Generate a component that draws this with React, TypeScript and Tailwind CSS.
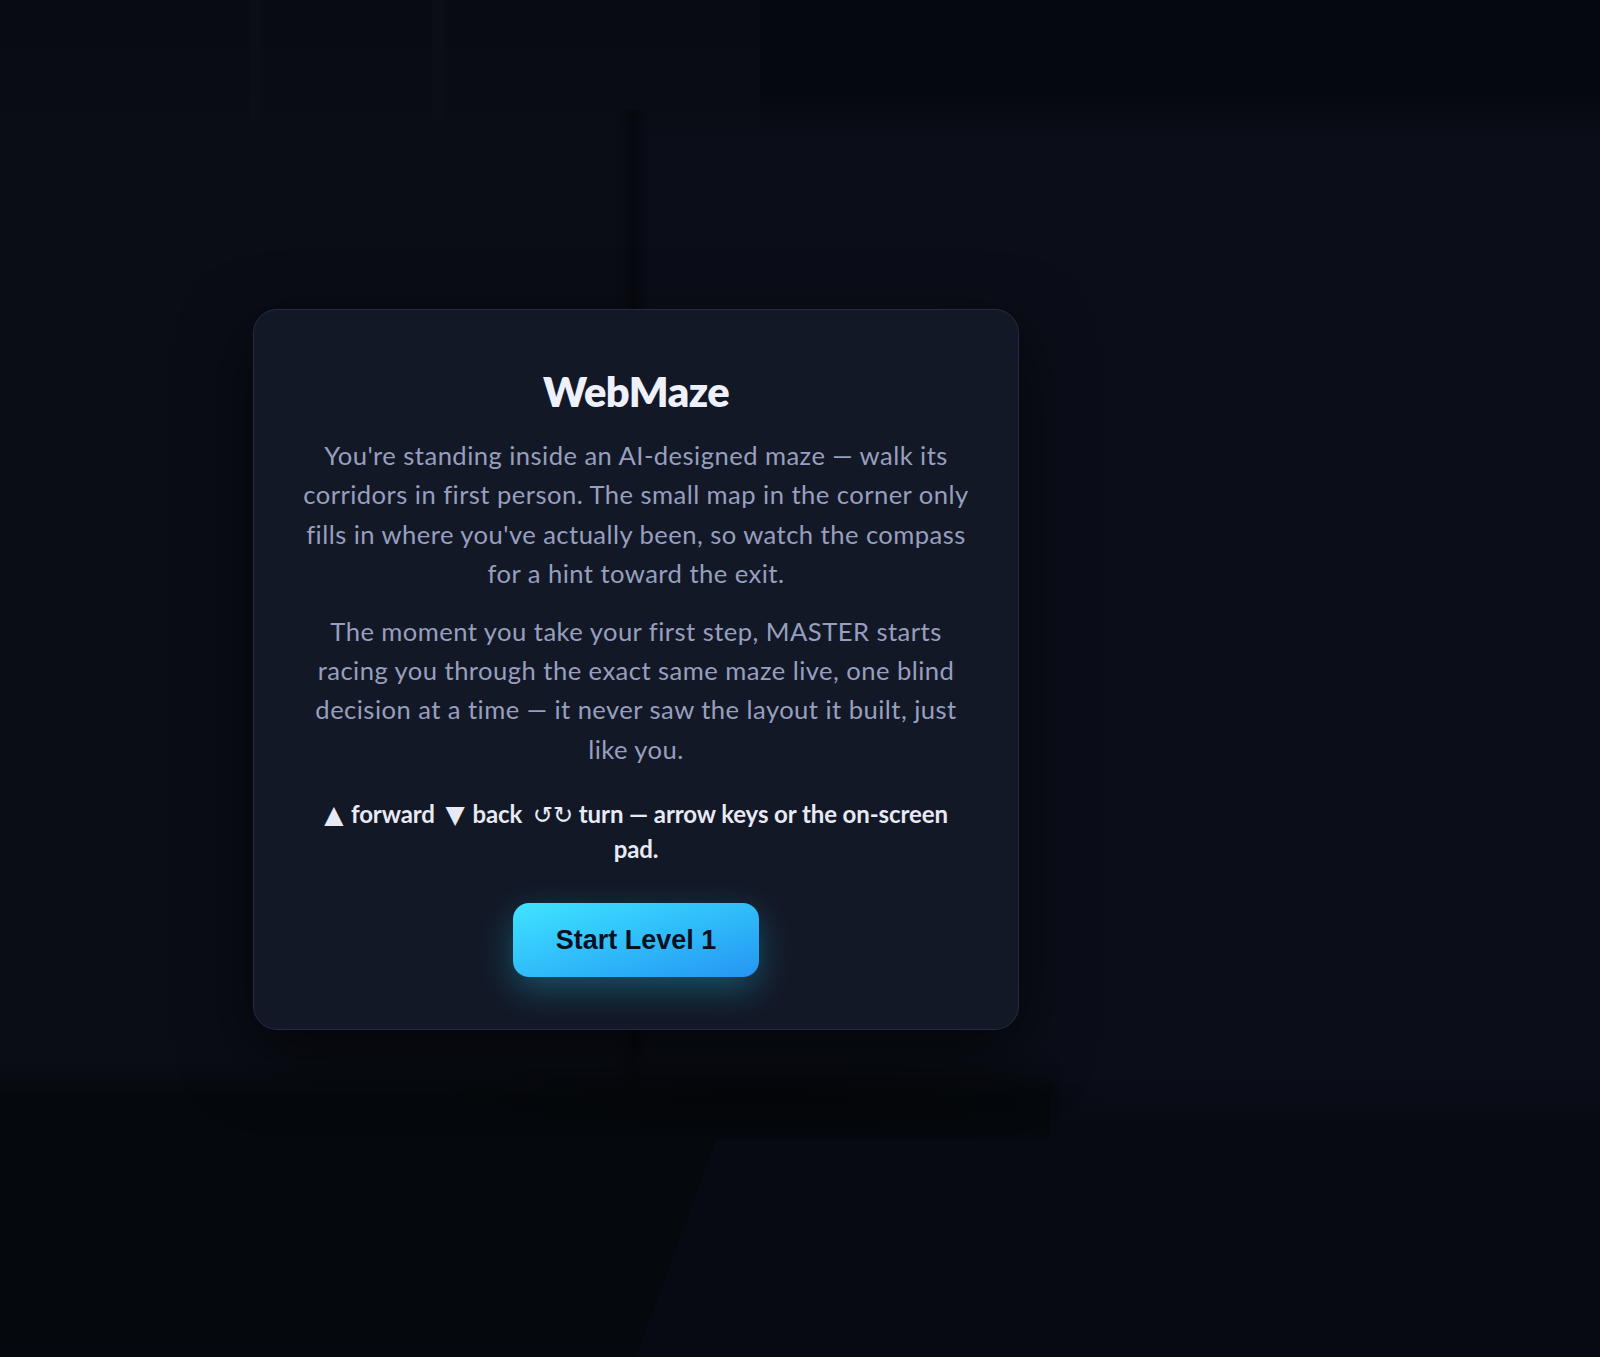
import React from "react";

function MazeBackdrop() {
  return (
    <svg
      className="absolute inset-0 h-full w-full"
      viewBox="0 0 1600 1357"
      preserveAspectRatio="none"
      aria-hidden="true"
    >
      <defs>
        <linearGradient id="ceilR" x1="0" y1="0" x2="0" y2="1">
          <stop offset="0" stopColor="#05080e" />
          <stop offset="0.66" stopColor="#05080e" />
          <stop offset="1" stopColor="#0b0e18" />
        </linearGradient>
        <linearGradient id="ceilL" x1="0" y1="0" x2="0" y2="1">
          <stop offset="0" stopColor="#080b12" />
          <stop offset="0.7" stopColor="#090c14" />
          <stop offset="1" stopColor="#0a0d16" />
        </linearGradient>
        <linearGradient id="seam" x1="0" y1="0" x2="1" y2="0">
          <stop offset="0" stopColor="#0a0d16" stopOpacity="0" />
          <stop offset="0.5" stopColor="#06080e" />
          <stop offset="1" stopColor="#0b0e18" stopOpacity="0" />
        </linearGradient>
        <linearGradient id="floorL" x1="0" y1="0" x2="0" y2="1">
          <stop offset="0" stopColor="#0a0d16" stopOpacity="0" />
          <stop offset="0.18" stopColor="#05080c" />
          <stop offset="1" stopColor="#05080c" />
        </linearGradient>
        <linearGradient id="floorR" x1="0" y1="0" x2="0" y2="1">
          <stop offset="0" stopColor="#0b0e18" stopOpacity="0" />
          <stop offset="0.25" stopColor="#080a13" />
          <stop offset="1" stopColor="#080a13" />
        </linearGradient>
        <radialGradient id="blot" cx="0.5" cy="0.5" r="0.5">
          <stop offset="0" stopColor="#04060a" />
          <stop offset="1" stopColor="#04060a" stopOpacity="0" />
        </radialGradient>
      </defs>
      <rect x="0" y="0" width="1600" height="1357" fill="#0b0e18" />
      <rect x="0" y="0" width="640" height="1060" fill="#0a0d16" />
      <rect x="0" y="0" width="770" height="135" fill="url(#ceilL)" />
      <rect x="760" y="0" width="840" height="140" fill="url(#ceilR)" />
      <rect x="250" y="0" width="10" height="120" fill="#0b0e17" />
      <rect x="432" y="0" width="12" height="120" fill="#0b0e17" />
      <rect x="612" y="110" width="44" height="980" fill="url(#seam)" />
      <rect x="0" y="1040" width="1060" height="317" fill="url(#floorL)" />
      <rect x="1050" y="1050" width="550" height="307" fill="url(#floorR)" />
      <polygon points="716,1140 1060,1140 1060,1357 636,1357" fill="#080a13" />
      <ellipse cx="760" cy="1098" rx="360" ry="40" fill="url(#blot)" />
    </svg>
  );
}

const sym = { fontFamily: "'DejaVu Sans', sans-serif" } as const;

export default function App() {
  return (
    <div
      className="relative h-[1357px] w-full overflow-hidden bg-[#0a0d16]"
      style={{ fontFamily: "Lato, 'Noto Sans', 'DejaVu Sans', sans-serif" }}
    >
      <MazeBackdrop />
      <div className="relative flex w-[1272px] justify-center pt-[309px]">
        <div className="w-[766px] rounded-[24px] border border-[#252a42] bg-[#131826] px-[46px] pb-[52px] pt-[56px] text-center shadow-[0_24px_70px_rgba(0,0,0,0.6)]">
          <h1 className="text-[41.6px] font-extrabold leading-[50px] tracking-[-0.5px] text-[#eef0fb]">
            WebMaze
          </h1>
          <p className="mt-[20px] text-[25.6px] leading-[39.4px] tracking-[0.45px] text-[#979fbe]">
            You're standing inside an AI-designed maze — walk its
            <br />
            corridors in first person. The small map in the corner only
            <br />
            fills in where you've actually been, so watch the compass
            <br />
            for a hint toward the exit.
          </p>
          <p className="mt-[18px] text-[25.6px] leading-[39.4px] tracking-[0.45px] text-[#979fbe]">
            The moment you take your first step, MASTER starts
            <br />
            racing you through the exact same maze live, one blind
            <br />
            decision at a time — it never saw the layout it built, just
            <br />
            like you.
          </p>
          <p className="mt-[26.5px] text-[24px] font-bold leading-[35px] tracking-[-0.1px] text-[#e7e9f4]">
            <span style={sym} className="mr-[2px] text-[25px] leading-none">▲</span> forward{" "}
            <span style={sym} className="ml-[5px] mr-[2px] text-[25px] leading-none">▼</span> back{" "}
            <span style={sym} className="ml-[5px] text-[24px] font-normal leading-none">↺↻</span> turn — arrow keys or the on-screen
            <br />
            pad.
          </p>
          <div className="mt-[37px] flex justify-center">
            <button
              type="button"
              className="flex h-[74px] w-[246px] items-center justify-center rounded-[16px] bg-gradient-to-br from-[#40e4ff] to-[#2795f2] text-[27px] font-bold text-[#0a1020] shadow-[0_12px_34px_rgba(34,200,240,0.33)]"
              style={{ fontFamily: "'Liberation Sans', Arial, sans-serif" }}
            >
              Start Level 1
            </button>
          </div>
        </div>
      </div>
    </div>
  );
}
